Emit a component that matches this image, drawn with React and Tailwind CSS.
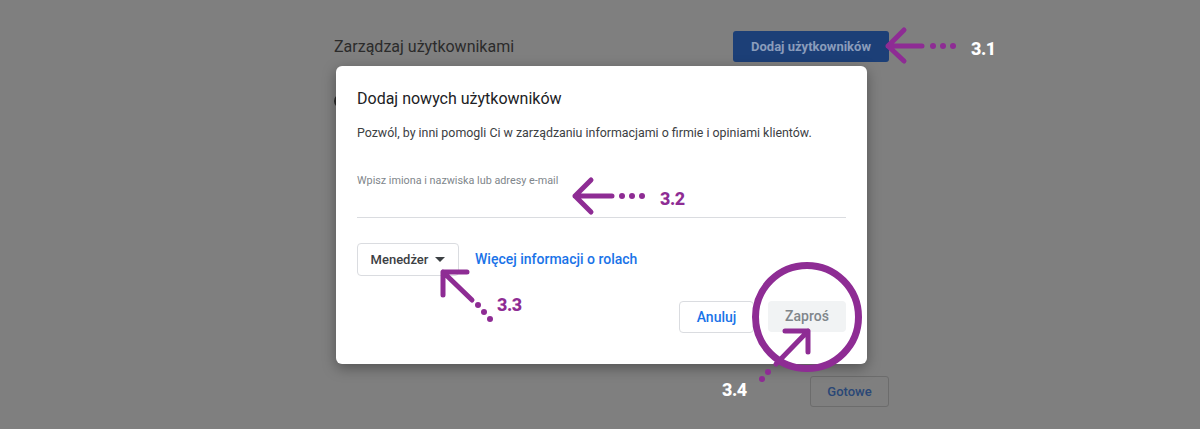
const purple = "#8e2c94";

const Annotations = () => {
    return (
        <>
            <svg className="absolute inset-0 pointer-events-none" width="1200" height="429" viewBox="0 0 1200 429" fill="none">
                <g stroke={purple} strokeWidth="5" strokeLinecap="round" strokeLinejoin="round">
                    {/* 3.1 */}
                    <path d="M904 30 L888 46 L904 61 M888 46 L922 46" />
                    {/* 3.2 */}
                    <path d="M591 180 L575 196 L591 212 M575 196 L612 196" />
                    {/* 3.3 */}
                    <path d="M467 272 L443 272 L443 295 M443 272 L472 300" />
                    {/* 3.4 */}
                    <path d="M785 331 L808 331 L808 352 M808 331 L776 364" />
                </g>
                <g fill={purple}>
                    <circle cx="933" cy="46" r="3" />
                    <circle cx="943" cy="46" r="3" />
                    <circle cx="953" cy="46" r="3" />
                    <circle cx="622" cy="196" r="3" />
                    <circle cx="632" cy="196" r="3" />
                    <circle cx="642" cy="196" r="3" />
                    <circle cx="478" cy="305" r="3" />
                    <circle cx="484" cy="312" r="3" />
                    <circle cx="490" cy="319" r="3" />
                    <circle cx="768" cy="372" r="3" />
                    <circle cx="762" cy="379" r="3" />
                </g>
                <circle cx="807" cy="317" r="51.5" stroke={purple} strokeWidth="7" />
            </svg>
            <span className="absolute left-[971px] top-[35px] text-[18px] font-extrabold text-white tracking-tight">3.1</span>
            <span className="absolute left-[660px] top-[185px] text-[18px] font-extrabold text-[#8e2c94] tracking-tight">3.2</span>
            <span className="absolute left-[497px] top-[291px] text-[18px] font-extrabold text-[#8e2c94] tracking-tight">3.3</span>
            <span className="absolute left-[722px] top-[376px] text-[18px] font-extrabold text-white tracking-tight">3.4</span>
        </>
    );
};

const Modal = () => {
    return (
        <div className="absolute left-[336px] top-[66px] w-[531px] h-[298px] bg-white rounded-[6px] shadow-[0_4px_14px_rgba(0,0,0,0.35)] pl-[21px] pr-[21px] pt-[21px] flex flex-col">
            {/* heading */}
            <h2 className="text-[16px] leading-[24px] font-normal text-[#202124]">Dodaj nowych użytkowników</h2>
            <p className="mt-[12px] text-[12.4px] leading-[20px] text-[#3c4043]">
                Pozwól, by inni pomogli Ci w zarządzaniu informacjami o firmie i opiniami klientów.
            </p>
            {/* input */}
            <div className="mt-[30px] text-[10.8px] leading-[16px] text-[#80868b]">Wpisz imiona i nazwiska lub adresy e-mail</div>
            <div className="mt-[28px] h-px bg-[#dadce0]"></div>
            {/* role */}
            <div className="mt-[25px] flex items-center gap-[16px]">
                <button className="h-[33px] w-[102px] border border-[#dadce0] rounded-[4px] flex items-center justify-center gap-[7px] text-[13px] font-medium text-[#3c4043]">
                    Menedżer
                    <svg width="10" height="5" viewBox="0 0 10 5"><path d="M0 0 L10 0 L5 5 Z" fill="#3c4043" /></svg>
                </button>
                <a className="text-[14px] font-medium text-[#1a73e8]">Więcej informacji o rolach</a>
            </div>
            {/* actions */}
            <div className="mt-[25px] flex justify-end gap-[14px]">
                <button className="h-[32px] w-[75px] border border-[#dadce0] rounded-[4px] text-[14px] font-medium text-[#1a73e8]">Anuluj</button>
                <button className="h-[31px] w-[78px] bg-[#f1f3f4] rounded-[4px] text-[14px] font-medium text-[#80868b]">Zaproś</button>
            </div>
        </div>
    );
};

const App = () => {
    return (
        <div className="relative w-full h-[429px] overflow-hidden bg-[#7f7f7f]" style={{ fontFamily: "Roboto, 'Liberation Sans', sans-serif" }}>
            {/* page behind the overlay */}
            <div className="ml-[334px] w-[555px] pt-[31px] flex flex-col">
                <div className="flex items-center justify-between">
                    <h1 className="text-[16px] text-[#2b2b2b]">Zarządzaj użytkownikami</h1>
                    <button className="h-[31px] w-[156px] rounded-[3px] bg-[#1c3f77] text-[13px] font-bold text-[#8a9cbb]">Dodaj użytkowników</button>
                </div>
                <div className="mt-[32px] w-[8px] h-[14px] rounded-l-full bg-[#2b2b2b]"></div>
                <div className="mt-[268px] flex justify-end">
                    <button className="h-[31px] w-[79px] rounded-[3px] border border-[#6c6c6c] text-[13px] font-medium text-[#2a4776]">Gotowe</button>
                </div>
            </div>
            <Modal />
            <Annotations />
        </div>
    );
};

export default App;
